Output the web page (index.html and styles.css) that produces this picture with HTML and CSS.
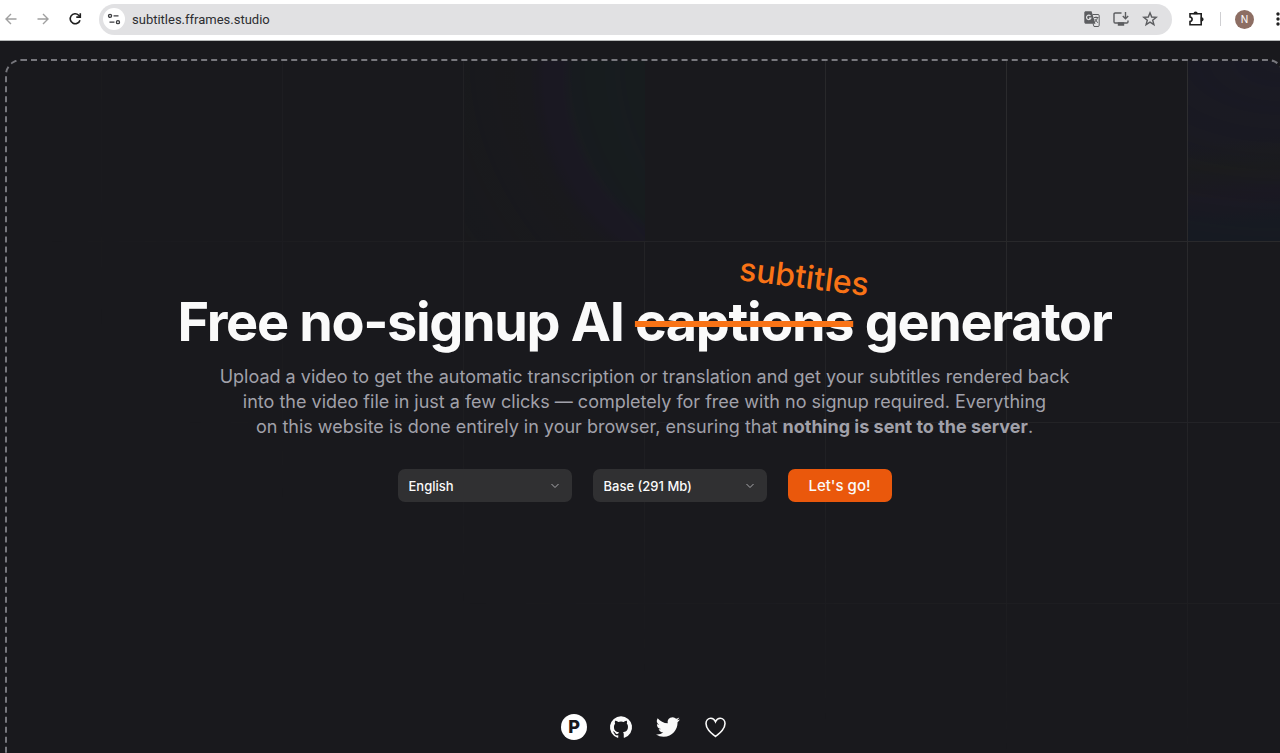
FILE: index.html
```html
<!DOCTYPE html>
<html lang="en">
<head>
<meta charset="utf-8">
<meta name="viewport" content="width=device-width, initial-scale=1">
<title>Free no-signup AI subtitles generator</title>
<link rel="stylesheet" href="styles.css">
</head>
<body>
<header class="toolbar">
  <nav class="toolbar-nav" aria-label="Browser navigation">
    <button class="icon-button muted" type="button" aria-label="Back"><svg viewBox="0 0 20 20"><path d="M15.500 10H5M10 5l-5 5 5 5"/></svg></button>
    <button class="icon-button muted" type="button" aria-label="Forward"><svg viewBox="0 0 20 20"><path d="M4.500 10H15M10 5l5 5-5 5"/></svg></button>
    <button class="icon-button" type="button" aria-label="Reload"><svg viewBox="0 0 20 20" class="bold"><path d="M15 11.200A5 5 0 1 1 13.700 6.200L15 7.600"/><path d="M15.300 4.200v3.900h-4"/></svg></button>
  </nav>
  <div class="address">
    <button class="site-info" type="button" aria-label="Site information"><svg viewBox="0 0 20 20"><circle cx="5.600" cy="6.500" r="1.700"/><path d="M9.500 6.500H15M5 13.500h5.500"/><circle cx="14.400" cy="13.500" r="1.700"/></svg></button>
    <input class="url" type="text" aria-label="Address" value="subtitles.fframes.studio">
    <div class="address-actions">
      <button class="icon-button gray" type="button" aria-label="Translate"><svg viewBox="0 0 20 20"><path class="solid" d="M3.500 3h5.500l3.500 11H4a1 1 0 0 1-1-1V3.500z"/><path class="thin" d="M10.500 5.500H16a1.200 1.200 0 0 1 1.200 1.200v9.600a1.200 1.200 0 0 1-1.200 1.200h-4l-1-3M12 8.500h4.500M14 7.500v1M15.500 8.500c-.4 2-1.500 3.500-3 4.800M12.800 10l3 3.800"/><path class="pale" d="M8.500 7A2.200 2.200 0 1 0 8.800 9.200H7"/></svg></button>
      <button class="icon-button gray" type="button" aria-label="Install app"><svg viewBox="0 0 20 20"><path d="M10.500 4H4.200A1.200 1.200 0 0 0 3 5.200v7.600A1.200 1.200 0 0 0 4.200 14h11.600a1.200 1.200 0 0 0 1.200-1.200V11.500M14.500 3v6.500M11.800 7l2.700 2.700L17.200 7"/><path class="solid" d="M7.500 14h5v2h-5z"/></svg></button>
      <button class="icon-button gray" type="button" aria-label="Bookmark"><svg viewBox="0 0 20 20"><path d="M10 3.800l1.700 4.200 4.500.3-3.500 2.900 1.200 4.400-3.900-2.500-3.900 2.500 1.200-4.400-3.500-2.900 4.500-.3z"/></svg></button>
    </div>
  </div>
  <button class="icon-button" type="button" aria-label="Extensions"><svg viewBox="0 0 20 20" class="bold"><path d="M4 4.800h11.200v10.900H4v-3.200c2.800-.4 2.800-4.100 0-4.500z"/><path class="solid" d="M8.300 4.500a1.300 1.300 0 0 1 2.600 0zM15.500 9a1.300 1.300 0 0 1 0 2.600z"/></svg></button>
  <span class="divider"></span>
  <button class="avatar" type="button">N</button>
  <button class="icon-button" type="button" aria-label="Menu"><svg viewBox="0 0 20 20"><circle class="solid" cx="10" cy="5" r="1"/><circle class="solid" cx="10" cy="10" r="1"/><circle class="solid" cx="10" cy="15" r="1"/></svg></button>
</header>

<div class="frame">
  <div class="backdrop" aria-hidden="true">
    <span class="tile tile-green"></span>
    <span class="tile tile-blue"></span>
  </div>
  <main class="hero">
    <h1 class="title">Free no-signup AI <span class="swap"><ins class="note">subtitles</ins><del class="struck">captions</del></span> generator</h1>
    <p class="lead">Upload a video to get the automatic transcription or translation and get your subtitles rendered back into the video file in just a few clicks — completely for free with no signup required. Everything<br> on this website is done entirely in your browser, ensuring that <strong>nothing is sent to the server</strong>.</p>
    <form class="controls">
      <label class="picker"><select aria-label="Language"><option>English</option></select><svg viewBox="0 0 10 10"><path d="M1.500 3L5 6.500 8.500 3"/></svg></label>
      <label class="picker"><select aria-label="Model"><option>Base (291 Mb)</option></select><svg viewBox="0 0 10 10"><path d="M1.500 3L5 6.500 8.500 3"/></svg></label>
      <button class="go" type="button">Let's go!</button>
    </form>
  </main>
  <footer class="links">
    <a class="hunt" href="#" title="Product Hunt">P</a>
    <a href="#" aria-label="GitHub"><svg viewBox="0 0 26 26"><path transform="translate(2 2) scale(.917)" d="M12 .3a12 12 0 0 0-3.800 23.400c.6.100.8-.3.800-.6v-2c-3.300.7-4-1.600-4-1.600-.6-1.400-1.400-1.800-1.400-1.800-1-.7.100-.7.100-.7 1.200 0 1.900 1.200 1.900 1.200 1 1.800 2.800 1.300 3.500 1 0-.8.400-1.300.7-1.600-2.700-.3-5.500-1.300-5.500-6 0-1.200.5-2.300 1.300-3.100-.2-.4-.6-1.600 0-3.200 0 0 1-.3 3.400 1.200a11.500 11.500 0 0 1 6 0c2.300-1.500 3.300-1.200 3.300-1.200.6 1.600.2 2.800 0 3.200.9.800 1.300 1.900 1.300 3.200 0 4.600-2.800 5.600-5.500 5.900.5.400.9 1 .9 2.200v3.300c0 .3.100.7.800.6A12 12 0 0 0 12 .3"/></svg></a>
    <a href="#" aria-label="Twitter"><svg viewBox="0 0 26 26"><path transform="translate(1 1)" d="M23.950 4.570a10 10 0 0 1-2.820.77 4.960 4.960 0 0 0 2.160-2.720c-.95.55-2 .95-3.130 1.180a4.920 4.920 0 0 0-8.380 4.480C7.690 8.100 4.070 6.130 1.640 3.160a4.920 4.920 0 0 0 1.520 6.570 4.900 4.900 0 0 1-2.230-.61v.06a4.920 4.920 0 0 0 3.950 4.830 5 5 0 0 1-2.210.08 4.940 4.940 0 0 0 4.600 3.420A9.870 9.870 0 0 1 0 19.540a14 14 0 0 0 7.550 2.210c9.050 0 14-7.500 14-13.980 0-.21 0-.42-.02-.63a9.940 9.940 0 0 0 2.420-2.570z"/></svg></a>
    <a href="#" aria-label="Sponsor"><svg viewBox="0 0 26 26" class="outline"><path d="M13.500 22.500C8 18 4 14.500 4 9.600 4 6.500 6.200 4.300 8.800 4.300c2 0 3.700 1.200 4.700 3.400 1-2.200 2.700-3.400 4.700-3.400 2.600 0 4.800 2.200 4.800 5.300 0 4.900-4 8.400-9.500 12.900z"/></svg></a>
  </footer>
</div>
</body>
</html>
```

FILE: styles.css
```css
* { box-sizing: border-box; }

html { background: #19191d; }

body {
  margin: 0;
  min-height: 100vh;
  display: flex;
  flex-direction: column;
  overflow: hidden;
  background: #19191d;
  color: #fafafa;
  font-family: Inter, "Liberation Sans", sans-serif;
}

button, input, select { font: inherit; color: inherit; }

button { padding: 0; border: 0; background: none; cursor: pointer; }

/* Browser toolbar */
.toolbar {
  display: flex;
  align-items: center;
  gap: 14px;
  height: 41px;
  padding: 0 0 2px 1px;
  margin-right: -8px;
  background: #fff;
  border-bottom: 1px solid #b5b7b8;
  color: #1f1f1f;
}

.toolbar-nav { display: flex; gap: 12px; }

.icon-button { display: flex; width: 20px; height: 20px; flex: none; }

.icon-button svg {
  width: 20px;
  height: 20px;
  fill: none;
  stroke: currentColor;
  stroke-width: 1.4;
}

.icon-button svg.bold { stroke-width: 1.6; }
.icon-button .solid { fill: currentColor; }
.icon-button .thin { stroke-width: 1; }
.icon-button .pale { stroke: #e1e1e3; stroke-width: 1.2; }
.muted { color: #a0a0a0; }
.gray { color: #5c5d60; }

.address {
  flex: 1;
  display: flex;
  align-items: center;
  gap: 7px;
  height: 31px;
  padding: 0 12px 0 4px;
  border-radius: 16px;
  background: #e1e1e3;
}

.site-info {
  display: flex;
  align-items: center;
  justify-content: center;
  width: 22px;
  height: 22px;
  border-radius: 50%;
  background: #fff;
}

.site-info svg {
  width: 18px;
  height: 18px;
  fill: none;
  stroke: #3c3d40;
  stroke-width: 1.5;
}

.url {
  flex: 1;
  min-width: 0;
  padding: 0;
  border: 0;
  background: none;
  outline: 0;
  font-family: Roboto, "Liberation Sans", sans-serif;
  font-size: 13px;
  color: #2c2d30;
}

.address-actions { display: flex; gap: 9px; }

.divider { width: 1px; height: 14px; background: #cfcfd2; }

.avatar {
  width: 19px;
  height: 19px;
  flex: none;
  border-radius: 50%;
  background: #8d6e63;
  color: #fff;
  font-size: 10px;
  line-height: 19px;
  text-align: center;
}

/* Drop zone frame */
.frame {
  position: relative;
  flex: 1;
  display: flex;
  flex-direction: column;
  justify-content: space-between;
  margin: 18px -4px -16px 5px;
  padding-bottom: 27px;
  border: 2px dashed #77777d;
  border-radius: 16px;
}

.backdrop {
  position: absolute;
  inset: 0;
  overflow: hidden;
  border-radius: 14px;
  background-image:
    linear-gradient(90deg, transparent 90px, #303032 90px 91px, transparent 91px),
    linear-gradient(transparent 180px, #303032 180px);
  background-size: 181px 181px;
  background-position: top center;
  -webkit-mask-image: radial-gradient(100% 100% at top right, #fff, transparent);
  mask-image: radial-gradient(100% 100% at top right, #fff, transparent);
}

.tile { position: absolute; top: 0; width: 180px; height: 180px; }

.tile-green {
  right: 50%;
  background: radial-gradient(circle at 277px 20px, #162021 0 168px, #1c182a 180px 198px, #1a1a1d 212px, #191b1e);
}

.tile-blue {
  left: calc(50% + 543px);
  background: linear-gradient(175deg, #1a1a24 0%, #1a1a23 42%, #1b1c1e 56%, #1b1924 72%, #161b24 86%);
}

.hero {
  position: relative;
  display: flex;
  flex-direction: column;
  align-items: center;
  padding: 228px 24px 0;
}

.title {
  margin: 0;
  font-size: 54px;
  line-height: 66px;
  font-weight: 700;
  letter-spacing: -0.025em;
  text-align: center;
}

.swap { position: relative; }

.struck { text-decoration: line-through #f97316 6px; }

.note {
  position: absolute;
  right: -16px;
  top: -32px;
  color: #f97316;
  font-size: 32px;
  line-height: 40px;
  font-weight: 500;
  letter-spacing: normal;
  text-decoration: none;
  transform: rotate(7deg);
}

.lead {
  max-width: 860px;
  margin: 9px 0 0;
  color: #a1a1aa;
  font-size: 18px;
  line-height: 25px;
  text-align: center;
}

.controls {
  display: flex;
  gap: 21px;
  margin-top: 30px;
}

.picker { position: relative; width: 174px; }

.picker select {
  appearance: none;
  width: 100%;
  height: 33px;
  padding: 0 24px 0 11px;
  border: 0;
  border-radius: 7px;
  background: #303032;
  font-size: 13px;
  font-weight: 500;
}

.picker svg {
  position: absolute;
  right: 12px;
  top: 12px;
  width: 10px;
  height: 10px;
  fill: none;
  stroke: #a8a8ac;
  pointer-events: none;
}

.go {
  width: 104px;
  height: 33px;
  border-radius: 7px;
  background: #ea580c;
  font-size: 15px;
  font-weight: 500;
}

.links {
  position: relative;
  display: flex;
  justify-content: center;
  gap: 21px;
}

.links a {
  width: 26px;
  height: 26px;
  color: #fafafa;
  text-decoration: none;
}

.links svg { display: block; width: 26px; height: 26px; fill: currentColor; }

.links .outline { fill: none; stroke: currentColor; stroke-width: 1.6; }

.links .hunt {
  border-radius: 50%;
  background: #fff;
  color: #18181b;
  font-size: 18px;
  font-weight: 800;
  line-height: 26px;
  text-align: center;
}
```
